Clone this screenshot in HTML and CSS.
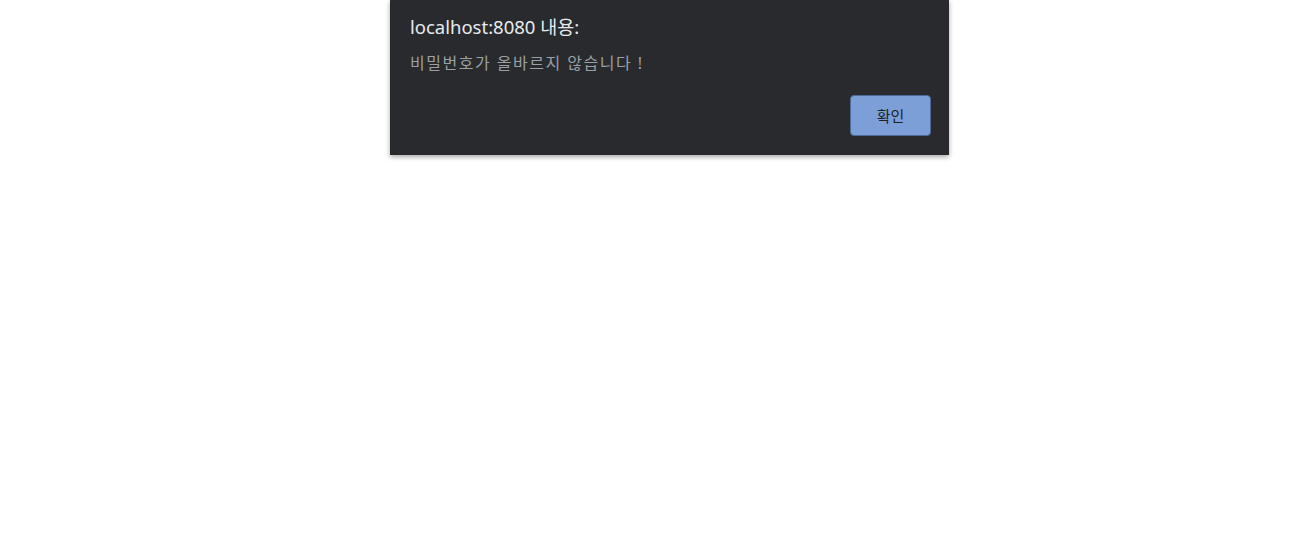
FILE: index.html
```html
<!DOCTYPE html>
<html lang="ko">
<head>
<meta charset="utf-8">
<link rel="stylesheet" href="styles.css">
</head>
<body>
<div class="page">
  <div class="dialog">
    <div class="title">localhost:8080 내용:</div>
    <div class="message">비밀번호가 올바르지 않습니다 !</div>
    <div class="actions">
      <button class="ok">확인</button>
    </div>
  </div>
</div>
</body>
</html>
```
FILE: styles.css
```css
html, body {
  margin: 0;
  padding: 0;
  background: #ffffff;
}
.page {
  width: 1307px;
  height: 534px;
  display: flex;
  justify-content: flex-start;
  padding-left: 390px;
  box-sizing: border-box;
}
.dialog {
  width: 559px;
  height: 155px;
  box-sizing: border-box;
  background: #292a2d;
  box-shadow: 0 2px 5px rgba(0,0,0,0.35);
  padding: 14px 18px 19px 20px;
  display: flex;
  flex-direction: column;
  font-family: "Noto Sans", "Noto Sans CJK KR", sans-serif;
}
.title {
  color: #e8eaed;
  font-size: 18.5px;
  line-height: 26px;
  letter-spacing: 0;
}
.message {
  color: #9aa0a6;
  font-size: 16px;
  line-height: 22px;
  margin-top: 12px;
  letter-spacing: 1.5px;
}
.actions {
  display: flex;
  justify-content: flex-end;
  margin-top: auto;
}
.ok {
  width: 81px;
  height: 41px;
  background: #7c9fd8;
  border: 1px solid #4d6a98;
  border-radius: 4px;
  color: #202124;
  font-family: "Noto Sans CJK KR", sans-serif;
  font-size: 15px;
  padding: 0;
}
```
